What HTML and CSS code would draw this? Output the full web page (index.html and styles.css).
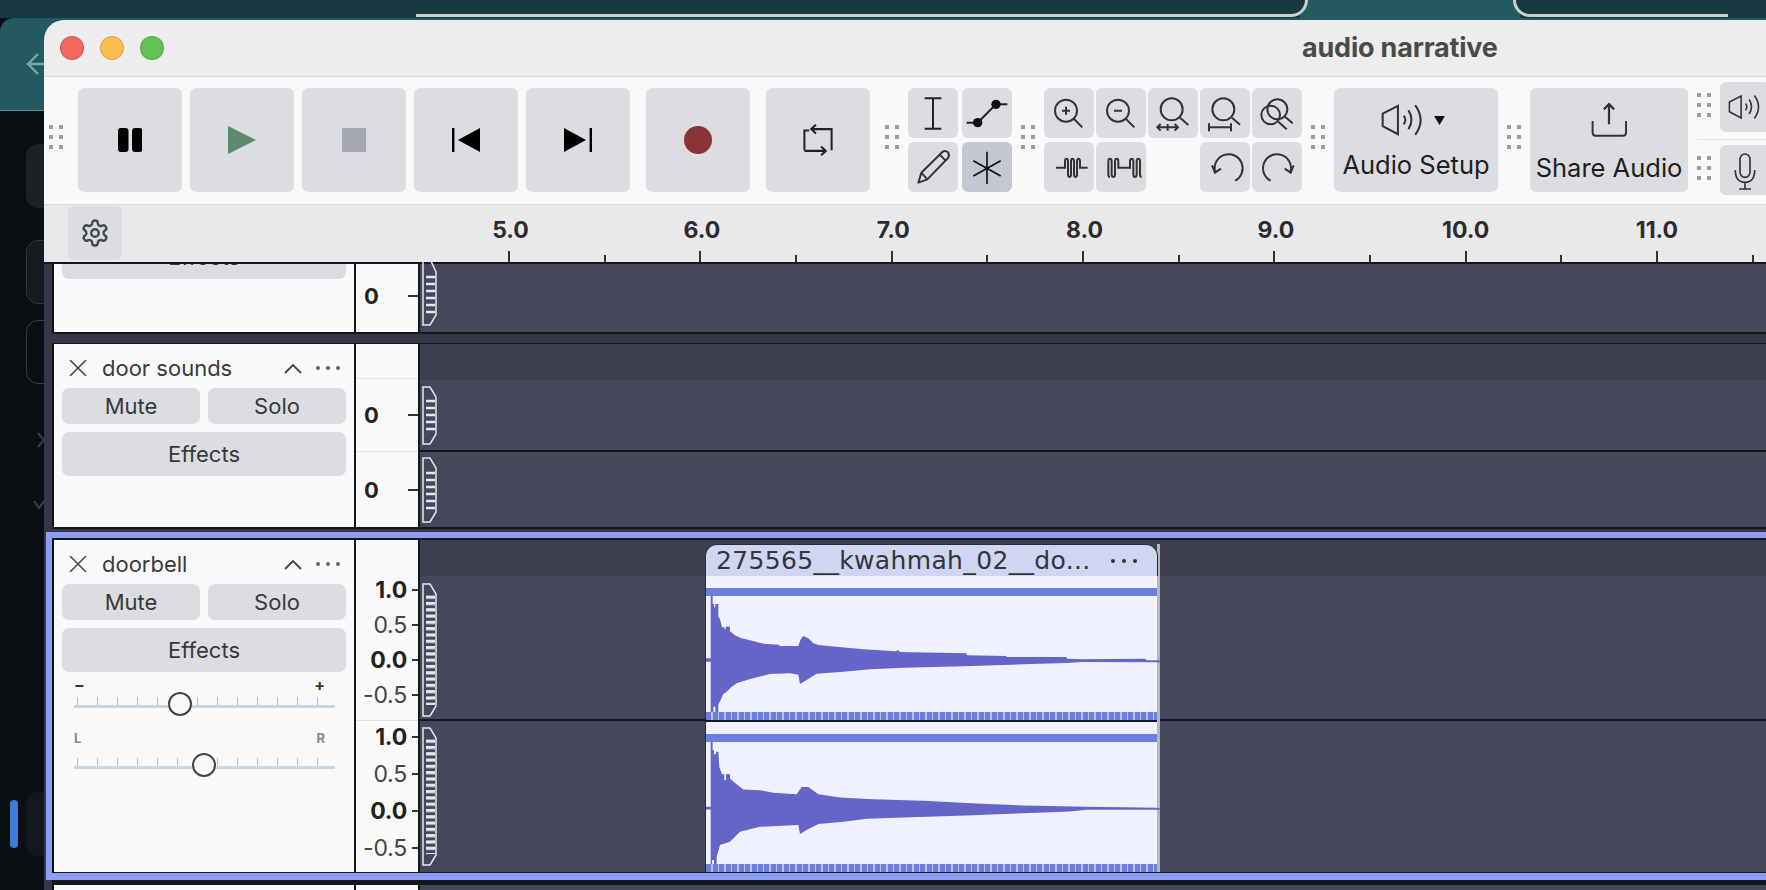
FILE: index.html
```html
<!DOCTYPE html>
<html lang="en">
<head>
<meta charset="utf-8">
<title>audio narrative</title>
<link rel="stylesheet" href="styles.css">
</head>
<body>
<div class="desk-head"></div>
<div class="desk-top"></div>
<div class="desk-gap"></div>
<div class="tab-a"></div>
<div class="tab-b"></div>
<svg class="desk-arrow" viewBox="0 0 20 24"><path d="M19 12H3M12 2 2 12l10 10" fill="none" stroke="#7fa3a6" stroke-width="2.4"/></svg>
<div class="side side-a"></div>
<div class="side side-b"></div>
<div class="side side-c"></div>
<svg class="side-chev-r" viewBox="0 0 8 16"><path d="M1 1l6 7-6 7" fill="none" stroke="#3c4046" stroke-width="2"/></svg>
<svg class="side-chev-d" viewBox="0 0 12 10"><path d="M1 1l5 7 5-7" fill="none" stroke="#3c4046" stroke-width="2"/></svg>
<div class="side-pill"></div>
<div class="side side-d"></div>

<main class="window">
  <header class="titlebar">
    <div class="lights"><span class="light red"></span><span class="light yellow"></span><span class="light green"></span></div>
    <h1 class="title">audio narrative</h1>
  </header>

  <div class="toolbar">
    <span class="grip grip-first"></span>
    <div class="transport">
      <button class="btn big"><svg width="24" height="24" viewBox="0 0 24 24"><rect x="0" y="0" width="10.5" height="24" rx="3"/><rect x="14" y="0" width="10.5" height="24" rx="3"/></svg></button>
      <button class="btn big"><svg width="28" height="28" viewBox="0 0 28 28"><path d="M0 0l28 14L0 28z" fill="#5b8a6f"/></svg></button>
      <button class="btn big"><span class="stop"></span></button>
      <button class="btn big"><svg width="28" height="24" viewBox="0 0 28 24"><path d="M28 0v24L6 12z"/><rect x="0" y="0" width="2.4" height="24"/></svg></button>
      <button class="btn big"><svg width="28" height="24" viewBox="0 0 28 24"><path d="M0 0v24l22-12z"/><rect x="25.6" y="0" width="2.4" height="24"/></svg></button>
    </div>
    <button class="btn big sep16"><span class="record"></span></button>
    <button class="btn big sep16"><svg width="34" height="34" viewBox="1084 370 100 100"><path d="M1094 450V392h14M1118 388h56v62M1094 452h60" fill="none" stroke="#222" stroke-width="6"/><path d="M1128 375l-14 13 14 13M1143 439l14 13-14 13" fill="none" stroke="#222" stroke-width="6"/></svg></button>
    <span class="grip grip-a"></span>
    <div class="tools">
      <button class="btn sm"><svg viewBox="0 0 150 150"><path d="M50 31h50M75 31v91M50 122h50" fill="none" stroke="#222" stroke-width="6"/></svg></button>
      <button class="btn sm"><svg viewBox="0 0 150 150"><path d="M14 104h33l55-55h34" fill="none" stroke="#222" stroke-width="6"/><circle cx="47" cy="104" r="14" fill="#111"/><circle cx="102" cy="49" r="14" fill="#111"/></svg></button>
      <button class="btn sm"><svg viewBox="0 0 150 150"><path d="M31 122l9-30 63-62q9-6 17 1 6 9 0 17l-62 64zM40 92l18 20M95 38l18 18" fill="none" stroke="#333" stroke-width="6" stroke-linejoin="round"/></svg></button>
      <button class="btn sm on"><svg viewBox="0 0 150 150"><path d="M75 29v97M34 56l82 46M116 56l-82 46" fill="none" stroke="#111" stroke-width="5"/><circle cx="75" cy="79" r="6" fill="#111"/></svg></button>
    </div>
    <span class="grip grip-b"></span>
    <div class="zooms">
      <button class="btn sm"><svg viewBox="0 0 150 150"><g fill="none" stroke="#333" stroke-width="6"><circle cx="66" cy="68" r="33"/><path d="M90 93l25 25M54 68h24M66 56v24"/></g></svg></button>
      <button class="btn sm"><svg viewBox="0 0 150 150"><g fill="none" stroke="#333" stroke-width="6"><circle cx="66" cy="68" r="33"/><path d="M90 93l25 25M54 68h24"/></g></svg></button>
      <button class="btn sm"><svg viewBox="0 0 150 150"><g fill="none" stroke="#333" stroke-width="6"><circle cx="71" cy="64" r="33"/><path d="M96 89l25 22M30 118h60M38 108l-10 10 10 10M80 108l10 10-10 10M59 108v20"/></g></svg></button>
      <button class="btn sm"><svg viewBox="0 0 150 150"><g fill="none" stroke="#333" stroke-width="6"><circle cx="70" cy="64" r="33"/><path d="M96 89l24 21M27 118h66M27 106v24M93 106v24"/></g></svg></button>
      <button class="btn sm"><svg viewBox="0 0 150 150"><g fill="none" stroke="#333" stroke-width="6"><circle cx="76" cy="64" r="30"/><circle cx="56" cy="81" r="28"/><path d="M99 86l23 20M79 101l25 23"/></g></svg></button>
      <button class="btn sm"><svg viewBox="0 0 150 150"><path d="M36 77h27V58q0-8 4.500-8T72 58v39q0 8 4.500 8T81 97V58q0-8 4.500-8T90 58v39q0 8 4.500 8T99 97V58q0-8 4.500-8t4.500 8v19h23" fill="none" stroke="#333" stroke-width="6"/></svg></button>
      <button class="btn sm"><svg viewBox="0 0 150 150"><path d="M37 58q0-8 5-8t5 8v39q0 8 5 8t5-8V58q0-8 5-8t5 8v19h35V58q0-8 5-8t5 8v39q0 8 5 8t5-8V58q0-8 5-8t5 8v39q0 8 5 8" fill="none" stroke="#333" stroke-width="6"/><path d="M37 58v39q0 8 5 8" fill="none" stroke="#333" stroke-width="6"/></svg></button>
      <span class="blank"></span>
      <button class="btn sm"><svg viewBox="0 0 150 150"><path d="M105 116A42 42 0 1 0 45 88M36 70l9 22 18-12" fill="none" stroke="#333" stroke-width="6"/></svg></button>
      <button class="btn sm"><svg viewBox="0 0 150 150"><path d="M56 116A42 42 0 1 1 116 88M125 70l-9 22-18-12" fill="none" stroke="#333" stroke-width="6"/></svg></button>
    </div>
    <span class="grip grip-b"></span>
    <button class="btn wide setup">
      <span class="setup-icon">
        <svg width="44" height="34" viewBox="195 305 130 100"><g fill="none" stroke="#333" stroke-width="6"><path d="M200 336v37l45 24V313z"/><path d="M262 342q10 12 0 26M276 326q18 28 0 56M296 311q32 44 0 88"/></g></svg>
        <svg width="11" height="9" viewBox="0 0 12 10"><path d="M0 0h12L6 10z" fill="#111"/></svg>
      </span>
      <span class="wide-label">Audio Setup</span>
    </button>
    <span class="grip grip-b"></span>
    <button class="btn wide share">
      <svg width="36" height="38" viewBox="820 295 112 114"><path d="M876 368V306M860 322l16-16 16 16" fill="none" stroke="#333" stroke-width="7"/><path d="M825 358v36q0 10 10 10h84q10 0 10-10v-36" fill="none" stroke="#333" stroke-width="6"/></svg>
      <span class="wide-label">Share Audio</span>
    </button>
    <div class="tb-stack">
      <div class="tb-row first"><span class="grip"></span><button class="btn sm"><svg class="icon-fit" viewBox="195 305 130 100"><g fill="none" stroke="#333" stroke-width="6"><path d="M200 336v37l45 24V313z"/><path d="M262 342q10 12 0 26M276 326q18 28 0 56M296 311q32 44 0 88"/></g></svg></button></div>
      <div class="tb-row"><span class="grip"></span><button class="btn sm"><svg viewBox="0 0 150 150"><g fill="none" stroke="#333" stroke-width="5"><rect x="60" y="27" width="30" height="70" rx="15"/><path d="M46 75q0 37 29 37t29-37M75 112v18M57 132h36"/></g></svg></button></div>
    </div>
  </div>

  <div class="ruler">
    <button class="gear"><svg width="30" height="30" viewBox="0 0 24 24" fill="none" stroke="#44464f" stroke-width="1.9" stroke-linejoin="round"><path d="M12.220 2h-.44a2 2 0 0 0-2 2v.18a2 2 0 0 1-1 1.730l-.43.25a2 2 0 0 1-2 0l-.15-.08a2 2 0 0 0-2.730.73l-.22.38a2 2 0 0 0 .73 2.730l.15.1a2 2 0 0 1 1 1.720v.51a2 2 0 0 1-1 1.740l-.15.09a2 2 0 0 0-.73 2.730l.22.38a2 2 0 0 0 2.730.73l.15-.08a2 2 0 0 1 2 0l.43.25a2 2 0 0 1 1 1.730V20a2 2 0 0 0 2 2h.44a2 2 0 0 0 2-2v-.18a2 2 0 0 1 1-1.730l.43-.25a2 2 0 0 1 2 0l.15.08a2 2 0 0 0 2.730-.73l.22-.39a2 2 0 0 0-.73-2.730l-.15-.08a2 2 0 0 1-1-1.740v-.5a2 2 0 0 1 1-1.740l.15-.09a2 2 0 0 0 .73-2.730l-.22-.38a2 2 0 0 0-2.730-.73l-.15.08a2 2 0 0 1-2 0l-.43-.25a2 2 0 0 1-1-1.730V4a2 2 0 0 0-2-2z"/><circle cx="12" cy="12" r="3"/></svg></button>
    <div class="scale">
      <div class="sec"><span>5.0</span></div>
      <div class="sec"><span>6.0</span></div>
      <div class="sec"><span>7.0</span></div>
      <div class="sec"><span>8.0</span></div>
      <div class="sec"><span>9.0</span></div>
      <div class="sec wide-sec"><span>10.0</span></div>
      <div class="sec wide-sec"><span>11.0</span></div>
    </div>
  </div>

  <div class="tracks">
    <section class="track track-top">
      <div class="panel"><button class="pbtn effects clipped">Effects</button></div>
      <div class="vruler"><div class="vrow zero fill pad"><span>0</span><i></i></div></div>
      <div class="lane"><div class="lch top-ch"><svg class="grip-shape" width="16" height="62" viewBox="0 0 16 62"><path d="M1 -5v66H8l6-10V8L8 -5" fill="none" stroke="#e6e6ee" stroke-width="1.500"/><path d="M4 13h9M4 20h9M4 27h9M4 34h9M4 41h9M4 48h9" stroke="#e6e6ee" stroke-width="2.500"/></svg></div></div>
    </section>

    <section class="track track-door">
      <div class="panel">
        <div class="phead">
          <svg class="x" viewBox="0 0 18 16"><path d="M1 0l16 16M17 0 1 16" fill="none" stroke="#444" stroke-width="1.500"/></svg>
          <span class="tname">door sounds</span>
          <svg class="chev" viewBox="0 0 18 11"><path d="M1 10l8-8 8 8" fill="none" stroke="#444" stroke-width="1.800"/></svg>
          <span class="dots"><b></b><b></b><b></b></span>
        </div>
        <div class="prow"><button class="pbtn">Mute</button><button class="pbtn">Solo</button></div>
        <button class="pbtn effects">Effects</button>
      </div>
      <div class="vruler">
        <div class="vhead"></div>
        <div class="vrow zero ch-a"><span>0</span><i></i></div>
        <div class="vrow zero ch-b"><span>0</span><i></i></div>
      </div>
      <div class="lane">
        <div class="lhead"></div>
        <div class="lch ch-a dark-line"><svg class="grip-shape" width="16" height="59" viewBox="0 0 16 59"><path d="M1 1v57H8l6-10V11L8 1z" fill="none" stroke="#e6e6ee" stroke-width="1.500"/><path d="M4 15h9M4 22h9M4 29h9M4 36h9M4 43h9" stroke="#e6e6ee" stroke-width="2.500"/></svg></div>
        <div class="lch ch-b"><svg class="grip-shape" width="16" height="66" viewBox="0 0 16 66"><path d="M1 1v64H8l6-10V11L8 1z" fill="none" stroke="#e6e6ee" stroke-width="1.500"/><path d="M4 16h9M4 23h9M4 30h9M4 37h9M4 44h9M4 51h9" stroke="#e6e6ee" stroke-width="2.500"/></svg></div>
      </div>
    </section>

    <div class="selected">
      <section class="track track-bell">
        <div class="panel">
          <div class="phead">
            <svg class="x" viewBox="0 0 18 16"><path d="M1 0l16 16M17 0 1 16" fill="none" stroke="#444" stroke-width="1.500"/></svg>
            <span class="tname">doorbell</span>
            <svg class="chev" viewBox="0 0 18 11"><path d="M1 10l8-8 8 8" fill="none" stroke="#444" stroke-width="1.800"/></svg>
            <span class="dots"><b></b><b></b><b></b></span>
          </div>
          <div class="prow"><button class="pbtn">Mute</button><button class="pbtn">Solo</button></div>
          <button class="pbtn effects">Effects</button>
          <div class="slider gain">
            <div class="slabels"><span>−</span><span>+</span></div>
            <div class="strack"><span class="thumb"></span></div>
          </div>
          <div class="slider pan">
            <div class="slabels"><span>L</span><span>R</span></div>
            <div class="strack"><span class="thumb"></span></div>
          </div>
        </div>
        <div class="vruler">
          <div class="vscale s1">
            <div class="vrow b"><span>1.0</span><i></i></div>
            <div class="vrow"><span>0.5</span><i></i></div>
            <div class="vrow b"><span>0.0</span><i></i></div>
            <div class="vrow"><span>-0.5</span><i></i></div>
          </div>
          <div class="vscale s2">
            <div class="vrow b"><span>1.0</span><i></i></div>
            <div class="vrow"><span>0.5</span><i></i></div>
            <div class="vrow b"><span>0.0</span><i></i></div>
            <div class="vrow"><span>-0.5</span><i></i></div>
          </div>
        </div>
        <div class="lane">
          <div class="lhead"></div>
          <div class="lch ch-c dark-line"><svg class="grip-shape" width="16" height="134" viewBox="0 0 16 134"><defs><pattern id="st" width="16" height="6.300" patternUnits="userSpaceOnUse"><rect x="4" y="0" width="9" height="3.200" fill="#e6e6ee"/></pattern></defs><path d="M1 1v132H8l6-10V11L8 1z" fill="none" stroke="#e6e6ee" stroke-width="1.500"/><rect x="0" y="12" width="16" height="110" fill="url(#st)"/></svg></div>
          <div class="lch ch-d"><svg class="grip-shape" width="16" height="139" viewBox="0 0 16 139"><path d="M1 1v137H8l6-10V11L8 1z" fill="none" stroke="#e6e6ee" stroke-width="1.500"/><rect x="0" y="12" width="16" height="115" fill="url(#st)"/></svg></div>

          <article class="clip">
            <div class="clip-head"><span class="clip-name">275565__kwahmah_02__do...</span><span class="dots light-dots"><b></b><b></b><b></b></span></div>
            <div class="wave-ch one">
              <div class="band"></div>
              <svg class="wave w1" viewBox="48 198 1365 348" preserveAspectRatio="none"><path d="M48 385H62V198H68V222H72V232H76V222H85V258L90 268 96 292H103V298H107V290H120V304L135 316 152 324 180 331 220 341 268 344V348H325L332 328 340 318 355 325 370 340 385 345 438 350 520 358 618 364 624 360 630 366 828 370 832 376 948 378 952 381 1128 381 1132 386 1175 388 1365 386 1370 391 1410 391V397H1370L1175 396 1130 399 1000 403 850 408 640 413 540 418 460 425 380 431 350 450 330 462 325 434 300 430 240 432 180 447 140 460 125 470 110 485 100 492 92 510 85 524V546H76V530H70V546H62V395H48Z"/></svg>
              <div class="dashes"></div>
            </div>
            <div class="clip-sep"></div>
            <div class="wave-ch two">
              <div class="band"></div>
              <svg class="wave w2" viewBox="48 95 1365 367" preserveAspectRatio="none"><path d="M48 290H62V95H68V120H72V132H78V124H85L88 170 96 192H103V210H108V192H120V205L135 218 160 238 210 240 250 248 320 252 335 230 355 230 385 252 450 262 550 267 700 272 860 280 1000 286 1190 290 1400 293 1410 294V299H1190L1140 304 980 310 830 316 640 322 530 326 460 335 385 342 350 360 330 372 325 345 210 350 150 365 120 395 90 405 80 440V462H72V450H66V462H62V298H48Z"/></svg>
              <div class="dashes"></div>
            </div>
          </article>
        </div>
      </section>
    </div>

    <section class="track track-next">
      <div class="panel"></div>
      <div class="vruler"></div>
      <div class="lane"></div>
    </section>
  </div>
</main>
</body>
</html>
```

FILE: styles.css
```css
* { box-sizing: border-box; }
html, body { margin: 0; padding: 0; }
body {
  position: relative;
  width: 1766px;
  height: 890px;
  overflow: hidden;
  background: #0b0f14;
  font-family: Inter, "Liberation Sans", sans-serif;
  color: #222;
}
button { border: 0; padding: 0; margin: 0; font: inherit; color: inherit; }

/* desktop behind the window */
.desk-top { position: absolute; left: 0; top: 0; width: 100%; height: 18px; background: #18393f; }
.desk-head { position: absolute; left: 0; top: 18px; width: 100%; height: 93px; background: #235a62; border-bottom: 1px solid #5f8e92; border-top-left-radius: 14px; }
.desk-gap { position: absolute; left: 1300px; top: 0; width: 220px; height: 20px; background: #235a62; }
.tab-a { position: absolute; left: 416px; top: 0; width: 892px; height: 17px; background: #18393f; border-bottom: 3px solid #cfd0d0; border-right: 3px solid #cfd0d0; border-bottom-right-radius: 18px; }
.tab-b { position: absolute; left: 1513px; top: 0; width: 215px; height: 17px; background: #18393f; border-bottom: 3px solid #cfd0d0; border-left: 3px solid #cfd0d0; border-bottom-left-radius: 18px; }
.desk-arrow { position: absolute; left: 26px; top: 52px; width: 20px; height: 24px; }
.side { position: absolute; left: 26px; width: 40px; height: 64px; border-radius: 12px; }
.side-a { top: 144px; background: #1d2025; }
.side-b { top: 240px; height: 64px; background: #16191e; border: 1px solid #33363b; }
.side-c { top: 320px; height: 64px; border: 1px solid #3a3d42; }
.side-d { top: 792px; background: #14171c; }
.side-chev-r { position: absolute; left: 37px; top: 432px; width: 8px; height: 16px; }
.side-chev-d { position: absolute; left: 33px; top: 500px; width: 12px; height: 10px; }
.side-pill { position: absolute; left: 10px; top: 800px; width: 8px; height: 48px; border-radius: 4px; background: #3f7ad8; }

/* window */
.window {
  position: absolute;
  left: 44px;
  top: 20px;
  width: 1722px;
  height: 870px;
  overflow: hidden;
  border-top-left-radius: 20px;
  background: #343748;
  display: flex;
  flex-direction: column;
}
.titlebar {
  flex: none;
  height: 57px;
  background: #ededed;
  border-bottom: 1px solid #d6d6d6;
  display: flex;
  align-items: center;
  padding-left: 16px;
}
.lights { display: flex; gap: 16px; margin-top: -1px; }
.light { width: 24px; height: 24px; border-radius: 50%; border: 1px solid rgba(0,0,0,.12); }
.red { background: #f2685e; }
.yellow { background: #f6bd4f; }
.green { background: #5fc454; }
.title { margin: -2px 0 0 1138px; font-size: 27px; font-weight: 700; letter-spacing: -.2px; color: #4a4a4a; white-space: nowrap; }

/* toolbar */
.toolbar {
  flex: none;
  height: 128px;
  padding: 11px 0 12px 5px;
  background: #f9f9f9;
  border-bottom: 1px solid #dcdcdc;
  display: flex;
  align-items: flex-start;
}
.btn { flex: none; display: flex; align-items: center; justify-content: center; background: #dcdde1; border-radius: 6px; }
.big { width: 104px; height: 104px; }
.sm { width: 50px; height: 50px; }
.sm svg { width: 50px; height: 50px; display: block; }
.sm svg.icon-fit { width: 34px; height: 26px; }
.on { background: #c5c7d3; }
.transport { display: flex; gap: 8px; margin-left: 15px; }
.sep16 { margin-left: 16px; }
.stop { width: 24px; height: 24px; background: #a5a8b1; }
.record { width: 28px; height: 28px; border-radius: 50%; background: #8a3535; }
.grip {
  flex: none;
  width: 14px;
  height: 24px;
  margin-top: 37px;
  background-image: linear-gradient(#9c9dab, #9c9dab), linear-gradient(#9c9dab, #9c9dab), linear-gradient(#9c9dab, #9c9dab), linear-gradient(#9c9dab, #9c9dab), linear-gradient(#9c9dab, #9c9dab), linear-gradient(#9c9dab, #9c9dab);
  background-size: 4px 4px;
  background-repeat: no-repeat;
  background-position: 0 0, 10px 0, 0 10px, 10px 10px, 0 20px, 10px 20px;
}
.grip-a { margin-left: 15px; margin-right: 9px; }
.grip-b { margin-left: 9px; margin-right: 9px; }
.tools { display: grid; grid-template-columns: 50px 50px; gap: 4px; }
.zooms { display: grid; grid-template-columns: repeat(5, 50px); gap: 4px 2px; }
.wide { flex-direction: column; height: 104px; justify-content: flex-start; }
.setup { width: 164px; padding-top: 15px; gap: 13px; }
.share { width: 158px; padding-top: 12px; gap: 15px; }
.setup-icon { display: flex; align-items: center; gap: 9px; margin-right: 6px; height: 34px; }
.wide-label { font-size: 25.500px; color: #1e1e22; line-height: 30px; white-space: nowrap; }
.tb-stack { flex: none; display: flex; flex-direction: column; margin: -11px 0 -12px 9px; height: 127px; width: 80px; }
.tb-row { flex: none; height: 64px; padding-top: 5px; display: flex; align-items: flex-start; gap: 9px; }
.tb-row.first { height: 63px; border-bottom: 1px solid #e6e6e8; }
.tb-row .grip { margin-top: 11px; }

/* time ruler */
.ruler {
  flex: none;
  height: 59px;
  background: #e9e9eb;
  border-bottom: 2px solid #17171b;
  display: flex;
  padding-left: 24px;
}
.gear { flex: none; width: 54px; height: 54px; margin-top: 1px; display: flex; align-items: center; justify-content: center; background: #dcdde1; border-radius: 6px; }
.scale { display: flex; margin-left: 291.330px; }
.sec { flex: none; position: relative; width: 191.330px; height: 57px; text-align: center; }
.sec span { display: block; margin-top: 12px; margin-left: 3px; font-size: 23px; font-weight: 700; line-height: 26px; color: #2b2b30; }
.sec.wide-sec span { margin-left: 0; }
.sec::before { content: ""; position: absolute; left: 50%; margin-left: -1px; bottom: 0; width: 2px; height: 11px; background: #333; }
.sec::after { content: ""; position: absolute; right: -1px; bottom: 0; width: 2px; height: 7px; background: #333; }

/* tracks */
.tracks { flex: 1; display: flex; flex-direction: column; min-height: 0; }
.track { flex: none; display: flex; margin-left: 8px; border-left: 2px solid #111; border-bottom: 2px solid #17171b; }
.panel { flex: none; width: 302px; background: #f9f9f9; border-right: 2px solid #17171b; padding: 0 8px; overflow: hidden; }
.vruler { flex: none; width: 64px; background: #f9f9f9; border-right: 2px solid #17171b; display: flex; flex-direction: column; }
.lane { flex: 1; position: relative; display: flex; flex-direction: column; background: #45475a; }
.track-top { height: 70px; }
.track-door { height: 186px; margin-top: 9px; border-top: 1px solid #17171b; }
.selected { flex: none; margin: 3px 0 0 2px; border-left: 6px solid #8e9ef0; border-top: 6px solid #8e9ef0; border-bottom: 7px solid #8e9ef0; }
.track-bell { height: 335px; margin-left: 0; border-top: 2px solid #17171b; border-bottom: 1px solid #17171b; }
.track-next { height: 10px; border-top: 5px solid #15161c; border-bottom: 0; }

.phead { height: 44px; padding-top: 4px; display: flex; align-items: center; }
.x { flex: none; width: 18px; height: 16px; margin-left: 7px; }
.tname { margin-left: 15px; font-size: 22px; color: #3a3a3e; line-height: 30px; white-space: nowrap; }
.chev { flex: none; width: 18px; height: 11px; margin-left: auto; }
.dots { flex: none; display: flex; gap: 6px; margin-left: 14px; margin-right: 6px; }
.dots b { width: 4px; height: 4px; border-radius: 50%; background: #666; }
.prow { display: flex; gap: 8px; }
.pbtn { display: block; flex: 1; height: 36px; background: #dcdde1; border-radius: 7px; font-size: 22px; line-height: 35px; color: #38383c; text-align: center; }
.effects { width: 100%; height: 44px; margin-top: 8px; line-height: 38px; }
.effects.clipped { margin-top: -29px; }

.slider { margin: 0 11px 0 12px; }
.gain { margin-top: 3px; }
.pan { margin-top: 16px; }
.slabels { display: flex; justify-content: space-between; height: 20px; padding: 0 10px 0 0; font-size: 16px; line-height: 20px; font-weight: 700; color: #333; }
.pan .slabels { height: 28px; font-size: 13px; color: #888; }
.strack {
  position: relative;
  height: 17px;
  background-image: linear-gradient(#c9d7e3, #c9d7e3), repeating-linear-gradient(to right, #b9b9be 0 1px, transparent 1px 20px);
  background-size: 100% 3px, 100% 8px;
  background-repeat: no-repeat;
  background-position: 0 10px, 3px 2px;
}
.thumb { position: absolute; top: -3px; width: 24px; height: 24px; border-radius: 50%; border: 2.500px solid #444; background: #f9f9f9; }
.gain .thumb { left: 94px; }
.pan .thumb { left: 118px; }

.vrow { display: flex; align-items: center; justify-content: flex-end; padding-right: 0; }
.vrow span { font-size: 23px; letter-spacing: -.2px; color: #444; }
.vrow i { flex: none; width: 6px; height: 2px; margin-left: 5px; background: #333; }
.vrow.b span { font-weight: 700; color: #222; }
.zero { justify-content: space-between; padding-left: 8px; }
.zero span { font-weight: 700; font-size: 22px; color: #222; }
.zero i { width: 10px; }
.fill { flex: 1; }
.pad { padding-bottom: 4px; }
.vhead { flex: none; height: 35px; border-bottom: 1px solid #e3e3e8; }
.vrow.ch-a { height: 73px; border-bottom: 1px solid #e3e3e8; }
.vrow.ch-b { flex: 1; }
.vscale { display: flex; flex-direction: column; }
.s1 { height: 181px; padding-top: 32px; border-bottom: 1px solid #e3e3e8; }
.s1 .vrow { height: 35px; }
.s2 { margin-top: -3px; }
.s2 .vrow { height: 37px; }

.lhead { flex: none; height: 36px; background: #3e404f; }
.lch { display: flex; align-items: flex-start; padding-left: 2px; }
.grip-shape { flex: none; display: block; overflow: visible; }
.top-ch { flex: 1; }
.lane > .ch-a { height: 72px; padding-top: 6px; }
.lane > .ch-b { flex: 1; padding-top: 5px; }
.lane > .ch-c { height: 145px; padding-top: 7px; }
.lane > .ch-d { flex: 1; padding-top: 6px; }
.dark-line { border-bottom: 2px solid #17171b; }

/* clip */
.clip {
  position: absolute;
  left: 285px;
  top: 4px;
  width: 455px;
  height: 328px;
  display: flex;
  flex-direction: column;
  border-right: 3px solid #b4b5bd;
}
.clip-head {
  flex: none;
  height: 32px;
  margin-right: -1px;
  background: #cfd6f2;
  border: 1px solid #2a2b38;
  border-bottom: 0;
  border-radius: 12px 12px 0 0;
  display: flex;
  align-items: center;
  padding-left: 10px;
}
.clip-name { font-family: "DejaVu Sans", sans-serif; font-size: 25px; letter-spacing: .35px; color: #33343c; line-height: 32px; white-space: nowrap; }
.light-dots { margin-left: auto; margin-right: 20px; gap: 7px; }
.light-dots b { background: #33343c; }
.wave-ch { flex: none; background: #eff2fe; border-left: 1px solid #2a2b38; display: flex; flex-direction: column; padding-top: 12px; }
.one { height: 144px; }
.two { height: 150px; }
.band { flex: none; height: 8px; background: #6c7fdd; }
.wave { flex: none; display: block; width: 455px; overflow: visible; fill: #6565c8; }
.w1 { height: 116px; }
.w2 { height: 122px; }
.dashes { flex: none; height: 8px; background: repeating-linear-gradient(to right, #6c7fdd 0 5px, #b6c0f2 5px 6.500px); }
.clip-sep { flex: none; height: 2px; background: #17171b; }
```
